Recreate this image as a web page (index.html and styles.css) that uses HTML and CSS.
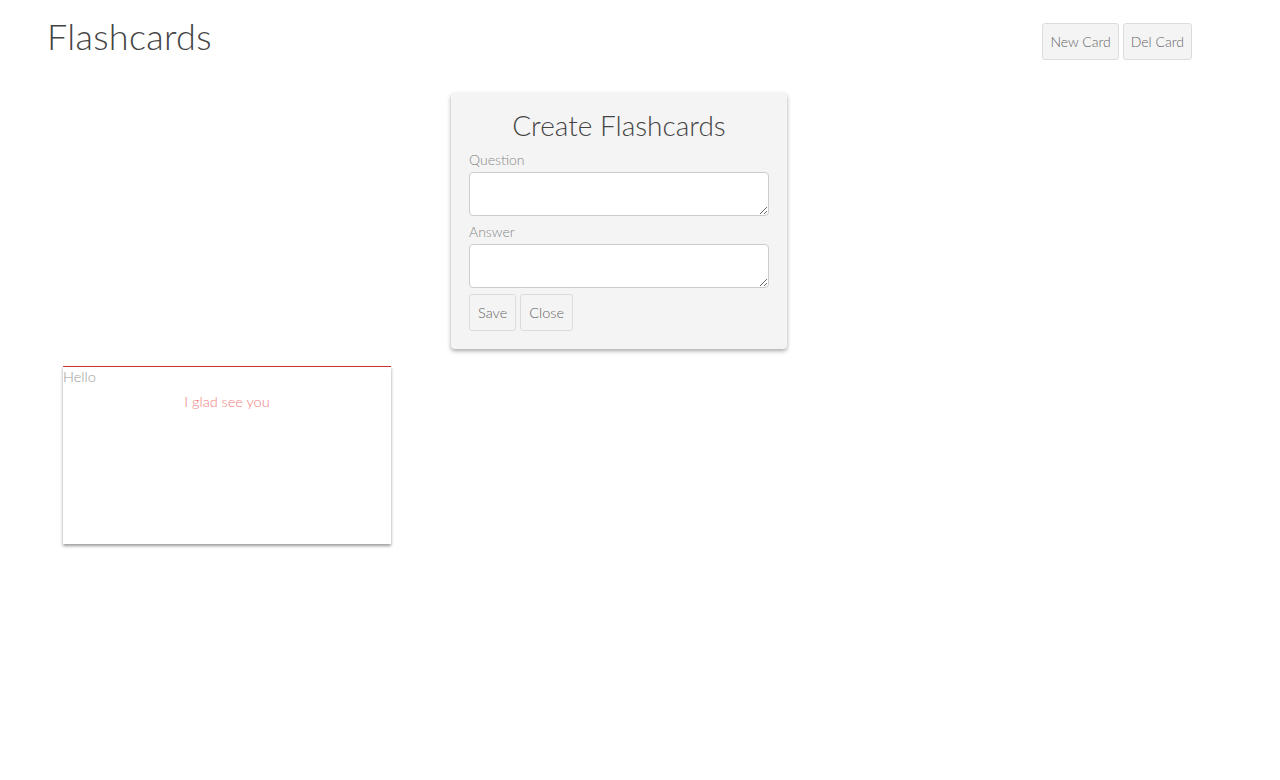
FILE: index.html
```html
<!DOCTYPE html>
<html>
<head>
<meta charset="utf-8">
<link rel="stylesheet" href="styles.css">
</head>
<body>
<header class="header">
  <h1 class="title">Flashcards</h1>
  <div class="actions">
    <button class="btn">New Card</button>
    <button class="btn">Del Card</button>
  </div>
</header>
<section class="modal">
  <h2 class="modal-title">Create Flashcards</h2>
  <label class="label">Question</label>
  <textarea class="field"></textarea>
  <label class="label">Answer</label>
  <textarea class="field"></textarea>
  <div class="modal-actions">
    <button class="btn btn-lg">Save</button>
    <button class="btn btn-lg">Close</button>
  </div>
</section>
<div class="cards">
  <div class="card">
    <div class="question">Hello</div>
    <div class="answer">I glad see you</div>
  </div>
</div>
</body>
</html>
```
FILE: styles.css
```css
* { box-sizing: border-box; }
html, body { min-height: 100%; }
body {
  margin: 0;
  font-family: "Lato", "Open Sans", sans-serif;
  font-weight: 300;
  background: #fff;
  color: #555;
  padding-bottom: 200px;
}
.header {
  display: flex;
  justify-content: space-between;
  align-items: flex-start;
  padding: 0 88px 0 47px;
  height: 93px;
}
.title {
  margin: 12px 0 0 0;
  font-size: 36px;
  line-height: 48px;
  font-weight: 300;
  color: #444;
  letter-spacing: 0.3px;
}
.actions {
  display: flex;
  gap: 4px;
  margin-top: 23px;
}
.btn {
  font-family: inherit;
  font-weight: 300;
  font-size: 14px;
  color: #666;
  background: #f4f4f4;
  border: 1px solid #dcdcdc;
  border-radius: 3px;
  height: 37px;
  padding: 0 7px;
}
.modal {
  width: 336px;
  margin-left: 451px;
  background: #f4f4f4;
  border-radius: 4px;
  box-shadow: 0 2px 4px rgba(0,0,0,0.35);
  padding: 14px 18px 18px;
  display: flex;
  flex-direction: column;
}
.modal-title {
  margin: 0 0 8px;
  text-align: center;
  font-size: 28px;
  line-height: 36px;
  font-weight: 300;
  color: #444;
}
.label {
  font-size: 14px;
  line-height: 18px;
  color: #888;
  margin-bottom: 3px;
}
.field {
  width: 300px;
  height: 44px;
  border: 1px solid #ccc;
  border-radius: 4px;
  background: #fff;
  resize: vertical;
  margin: 0 0 7px;
  display: block;
}
.modal-actions {
  display: flex;
  gap: 4px;
  margin-top: -1px;
}
.btn-lg {
  height: 37px;
  padding: 0 8px;
  font-size: 14.5px;
}
.cards {
  padding: 17px 0 0 63px;
}
.card {
  width: 328px;
  height: 178px;
  border-top: 1px solid #c33;
  background: #fff;
  box-shadow: 0 2px 3px rgba(0,0,0,0.4);
  font-size: 14.5px;
}
.question {
  color: #999;
  line-height: 18px;
  margin-top: 1px;
}
.answer {
  text-align: center;
  color: #f07c7c;
  margin-top: 7px;
}
```
